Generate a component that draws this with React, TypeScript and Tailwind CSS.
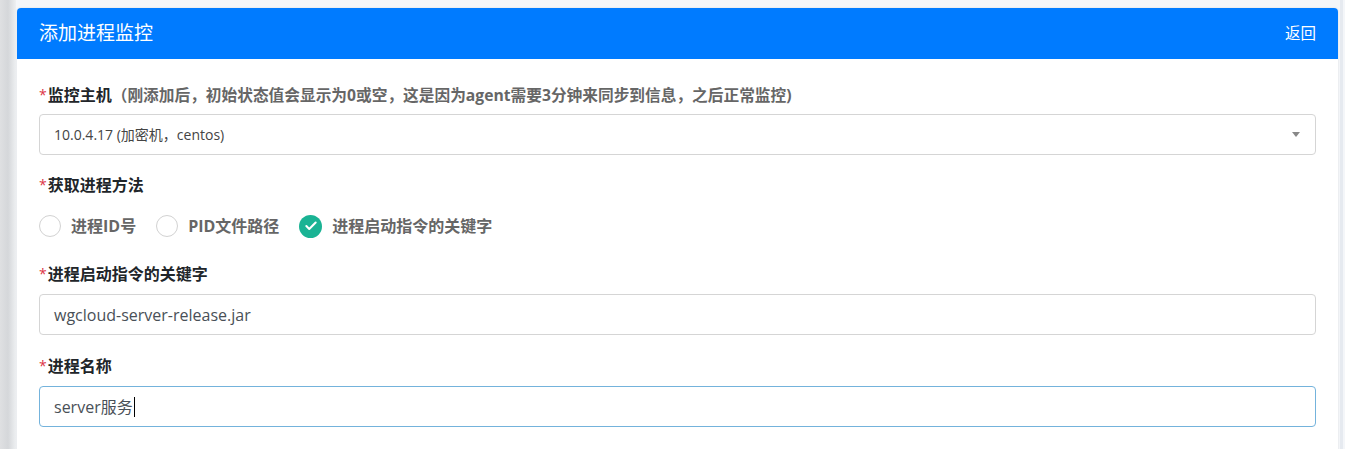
import { Check } from 'lucide-react';

const FONT = { fontFamily: '"Open Sans", "Noto Sans CJK SC", sans-serif' };

function Label({ children, note }: { children: string; note?: string }) {
  return (
    <div className="flex h-[22px] items-center text-[16px] leading-[22px] font-bold text-[#212529]">
      <span className="mr-[1px] text-[14px] font-normal text-[#dc3545]">*</span>
      <span>{children}</span>
      {note && <span className="text-[15.7px] text-[#666666]">{note}</span>}
    </div>
  );
}

function Radio({ label, checked }: { label: string; checked?: boolean }) {
  return (
    <div className="flex items-center">
      {checked ? (
        <span className="flex h-[23px] w-[23px] items-center justify-center rounded-full bg-[#1ab394]">
          <Check className="h-[14px] w-[14px] text-white" strokeWidth={3.5} />
        </span>
      ) : (
        <span className="h-[22px] w-[22px] rounded-full border border-[#d2d2d2] bg-white" />
      )}
      <span className="ml-[10px] text-[16px] font-bold text-[#666666]">{label}</span>
    </div>
  );
}

export default function App() {
  return (
    <div className="flex h-screen overflow-hidden bg-[#f4f6f9]" style={FONT}>
      <div className="w-[16px] shrink-0 bg-gradient-to-r from-[#dfe0e2] via-[#d5d7da] to-[#eef0f2]" />

      <div className="ml-[1px] pt-[8px]">
        <div className="w-[1321px] rounded-t-[4px] bg-white shadow-[0_0_2px_rgba(0,0,0,0.12)]">
          <div className="flex h-[51px] items-center justify-between rounded-t-[4px] bg-[#007bff] pl-[22px] pr-[22px] text-white">
            <h1 className="text-[19px] leading-none font-normal">添加进程监控</h1>
            <span className="text-[15.5px]">返回</span>
          </div>

          <div className="px-[22px] pt-[25px] pb-[30px]">
            <Label note="（刚添加后，初始状态值会显示为0或空，这是因为agent需要3分钟来同步到信息，之后正常监控)">
              监控主机
            </Label>
            <div className="mt-[8px] flex h-[41px] items-center justify-between rounded-[4px] border border-[#d5d5d5] bg-white pl-[14px] pr-[15px] text-[14px] text-[#444444]">
              <span>10.0.4.17 (加密机，centos)</span>
              <span className="h-0 w-0 border-x-[4px] border-t-[5px] border-x-transparent border-t-[#888888]" />
            </div>

            <div className="mt-[19px]">
              <Label>获取进程方法</Label>
            </div>
            <div className="mt-[18px] flex items-center gap-[20px]">
              <Radio label="进程ID号" />
              <Radio label="PID文件路径" />
              <Radio label="进程启动指令的关键字" checked />
            </div>

            <div className="mt-[25px]">
              <Label>进程启动指令的关键字</Label>
            </div>
            <div className="mt-[9px] flex h-[41px] items-center rounded-[4px] border border-[#d5d5d5] bg-white pl-[14px] text-[16px] text-[#495057]">
              wgcloud-server-release.jar
            </div>

            <div className="mt-[20px]">
              <Label>进程名称</Label>
            </div>
            <div className="mt-[9px] flex h-[41px] items-center rounded-[4px] border border-[#74b3dc] bg-white pl-[14px] text-[16px] text-[#495057]">
              <span>server服务</span>
              <span className="ml-[1px] h-[20px] w-[1px] bg-black" />
            </div>
          </div>
        </div>
      </div>

      <div className="ml-[2px] w-[3px] shrink-0 bg-[#e6eaf0]" />
    </div>
  );
}
